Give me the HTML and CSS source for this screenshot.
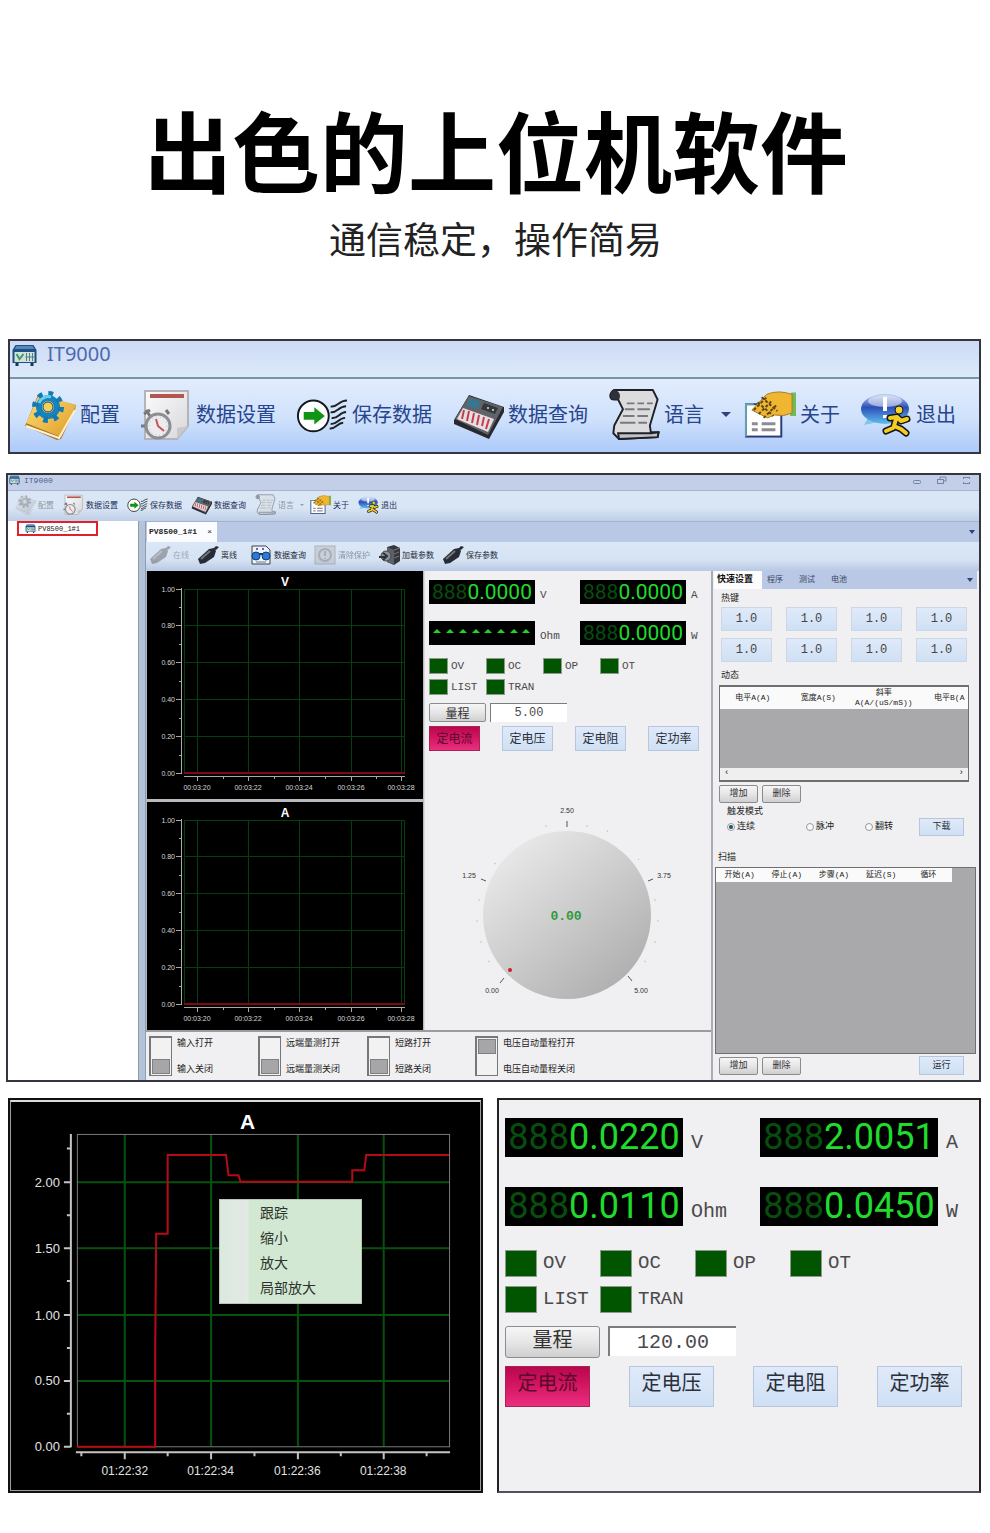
FILE: index.html
```html
<!DOCTYPE html>
<html lang="zh-CN">
<head>
<meta charset="utf-8">
<meta name="viewport" content="width=device-width, initial-scale=1">
<title>出色的上位机软件</title>
<link rel="stylesheet" href="styles.css">
</head>
<body>
<svg class="sprite" aria-hidden="true">
  <defs>
    <linearGradient id="gold" x1="0" y1="0" x2="1" y2="1"><stop offset="0" stop-color="#ffe27a"/><stop offset="1" stop-color="#dd9a26"/></linearGradient>
    <linearGradient id="glass" x1="0" y1="0" x2="0" y2="1"><stop offset="0" stop-color="#b9cbf0"/><stop offset=".45" stop-color="#2c50b8"/><stop offset="1" stop-color="#5fc0ee"/></linearGradient>
    <linearGradient id="paper" x1="0" y1="0" x2="1" y2="1"><stop offset="0" stop-color="#fbfbfc"/><stop offset="1" stop-color="#d8d8dc"/></linearGradient>
    <linearGradient id="dial" x1="0.1" y1="0.05" x2="0.85" y2="0.95"><stop offset="0" stop-color="#ececed"/><stop offset=".45" stop-color="#d0d0d1"/><stop offset="1" stop-color="#adadae"/></linearGradient>
  </defs>
  <symbol id="i-app" viewBox="0 0 26 22">
    <path d="M4 1h18l3 5v13H1V6z" fill="#1f4f86"/><path d="M5 2h16l2 3H3z" fill="#5688b8"/>
    <rect x="3" y="8" width="20" height="10" fill="#cfe3d6"/><path d="M5 10l3 5 4-5" fill="none" stroke="#3f9a68" stroke-width="2"/>
    <path d="M15 9v8M18 9v8M21 9v8M14 13h9" stroke="#557a90"/><path d="M4 19h3v3H4zM19 19h3v3h-3z" fill="#1b3356"/>
  </symbol>
  <symbol id="i-config" viewBox="0 0 52 52">
    <path d="M1 38L14 7l38 10-1 5-14 29-4 1z" fill="#a9772c"/><path d="M2 35L15 7l37 10-15 32z" fill="url(#gold)"/>
    <path d="M2 38l33 12 16-28" fill="none" stroke="#fff3cf" stroke-width="2"/>
    <circle cx="24" cy="19" r="9" fill="none" stroke="#1583bd" stroke-width="6"/>
    <circle cx="24" cy="19" r="13" fill="none" stroke="#1478b2" stroke-width="6" stroke-dasharray="4.5 5.7"/>
    <path d="M15 15a10 10 0 0 1 12-6" fill="none" stroke="#62d0ee" stroke-width="3"/>
    <circle cx="24" cy="19" r="5" fill="#f5cf5b" stroke="#0d4d80"/>
  </symbol>
  <symbol id="i-dataset" viewBox="0 0 52 52">
    <path d="M5 3h43v35L37 51H5z" fill="url(#paper)" stroke="#b5b3b6" stroke-width="2"/><path d="M37 51V40l11-2z" fill="#c9c8cb"/>
    <path d="M10 8h34" stroke="#b05653" stroke-width="4"/>
    <path d="M6 22l4 6M4 26l6-4M1 38h4M26 22l3 4" stroke="#77787c" stroke-width="3"/>
    <circle cx="18" cy="38" r="12" fill="#ececee" stroke="#8d8e93" stroke-width="3"/><circle cx="18" cy="38" r="9" fill="none" stroke="#bbb" stroke-dasharray="1 3"/>
    <path d="M16 31l2 7 6 5" fill="none" stroke="#c8525a" stroke-width="2"/>
  </symbol>
  <symbol id="i-save" viewBox="0 0 54 52">
    <circle cx="18" cy="28" r="16" fill="#fff" stroke="#14181c" stroke-width="2"/>
    <path d="M8 24h11v-5l11 9-11 9v-5H8z" fill="#109414"/>
    <path d="M36 18c6 2 8-6 17-6M36 24c6 2 8-6 16-6M37 30c6 2 8-6 15-6M36 36c6 2 8-6 15-6M35 41c6 1 8-6 14-6" fill="none" stroke="#1c2127" stroke-width="2"/>
  </symbol>
  <symbol id="i-query" viewBox="0 0 52 52">
    <path d="M2 32L17 7l35 12v5L37 51 2 36z" fill="#27292e"/><path d="M3 31L17 8l34 11-15 28z" fill="#60636a"/>
    <path d="M18 10l11 4-5 7-10-4z" fill="#35788f"/><path d="M32 15l14 5-3 6-14-5z" fill="#34373b"/>
    <path d="M11 20l31 11-6 13L5 31z" fill="#e4dfe1"/>
    <path d="M12 22l-2 9M17 23l-2 10M22 25l-2 10M27 27l-2 10M32 29l-2 9M37 31l-3 10" stroke="#c83c4e" stroke-width="2"/>
    <circle cx="36" cy="20" r="1" fill="#ddd"/><circle cx="41" cy="22" r="1" fill="#ddd"/>
  </symbol>
  <symbol id="i-lang" viewBox="0 0 53 54">
    <path d="M6 2h40l5 10-8 27 1 7h8l-1 5-40 2-6-6 1-8 9-17-5-10H6C1 12 0 6 6 2z" fill="#dcdcde" stroke="#1e2126" stroke-width="2" stroke-linejoin="round"/>
    <path d="M6 2c6 1 7 6 5 10H6C1 11 1 5 6 2z" fill="#2d323a"/><path d="M10 47h34l8-1-1 5-40 2z" fill="#c2c2c5" stroke="#1e2126" stroke-width="2"/>
    <path d="M19 16h8m3 0h7m3 0h6M17 22h10m3 0h13M15 29h12m3 0h11M12 36h16m3 0h9" stroke="#77797d" stroke-width="2"/>
  </symbol>
  <symbol id="i-about" viewBox="0 0 53 52">
    <path d="M48 4h5v24h-6z" fill="#71bb55"/><rect x="2" y="16" width="36" height="33" fill="#fff" stroke="#2b3a78" stroke-width="2"/>
    <path d="M2 49V16h8" fill="none" stroke="#63a1b3" stroke-width="2"/>
    <path d="M23 6q12-5 26 0v19q-8 4-18 2l-7 3-16-8z" fill="#f0b632" stroke="#a77b24"/>
    <path d="M10 22L24 8m-9 18L29 12m-9 18L34 16M14 14l16 14M18 9l16 14" stroke="#5c4514" stroke-width="2" stroke-dasharray="3 2"/>
    <path d="M8 36h6m4 0h14M8 42h6m4 0h14" stroke="#8b8d93" stroke-width="3"/>
  </symbol>
  <symbol id="i-exit" viewBox="0 0 52 52">
    <path d="M8 30l-4 7 14-3z" fill="#7fc6ea"/><ellipse cx="25" cy="21" rx="24" ry="15" fill="url(#glass)"/><ellipse cx="25" cy="13" rx="17" ry="6" fill="#fff" opacity=".5"/>
    <path d="M25 9v14M25 27v3" stroke="#fff" stroke-width="4"/>
    <g fill="none" stroke-linecap="round" stroke-linejoin="round"><path d="M30 30l7-1 4 4 6-2M36 31l-2 7 7 3 5 4M33 40l-7 3" stroke="#151515" stroke-width="7"/><path d="M30 30l7-1 4 4 6-2M36 31l-2 7 7 3 5 4M33 40l-7 3" stroke="#f3cd25" stroke-width="4"/></g>
    <circle cx="39" cy="22" r="4" fill="#f7d62a" stroke="#151515"/>
  </symbol>
  <symbol id="i-pen" viewBox="0 0 22 20">
    <path d="M1 14L12 4l5-1 2 3-2 6-9 6-5 1z" fill="currentColor"/><path d="M4 14l9-8" stroke="#fff" stroke-opacity=".35" stroke-width="2"/><path d="M16 4l3-3 3 1-3 3z" fill="currentColor"/>
  </symbol>
  <symbol id="i-find" viewBox="0 0 22 20">
    <path d="M2 1h14l4 4v14H2z" fill="#eef3fa" stroke="#3b4350"/><circle cx="7" cy="4" r="1" fill="#38348b"/><circle cx="13" cy="4" r="1" fill="#38348b"/>
    <circle cx="6" cy="11" r="4" fill="#2e79d6" stroke="#123c78"/><circle cx="16" cy="11" r="4" fill="#2e79d6" stroke="#123c78"/><path d="M9 9h4" stroke="#123c78" stroke-width="2"/><path d="M6 17h10" stroke="#777"/>
  </symbol>
  <symbol id="i-clear" viewBox="0 0 22 20">
    <rect x="1" y="1" width="20" height="18" fill="#b4b6b8" stroke="#77797c"/><circle cx="11" cy="10" r="6" fill="none" stroke="#6b6d70" stroke-width="2"/><path d="M11 6v5M11 13v1" stroke="#6b6d70" stroke-width="2"/>
  </symbol>
  <symbol id="i-load" viewBox="0 0 22 20">
    <path d="M9 2l7-2 6 3v13l-6 4-7-3z" fill="#34373c"/><path d="M9 2l7 3v15l-7-3z" fill="#5c6067"/><path d="M16 5l6-2M16 9l5-2M16 13l5-2" stroke="#777"/>
    <circle cx="8" cy="11" r="5" fill="#8d9298" stroke="#44484e"/><path d="M1 12h7M5 8l4 3-4 4" fill="none" stroke="#2f3338" stroke-width="2"/>
  </symbol>
  <symbol id="trend-grid" viewBox="0 0 276 228">
    <g stroke="#04400f"><path d="M37 18.5H258M37 54.5H258M37 91.5H258M37 128.5H258M37 165.5H258"/><path d="M37.5 18V202M50.5 18V202M101.5 18V202M152.5 18V202M204.5 18V202M254.5 18V202M257.5 18V202"/></g>
    <path d="M37 202H258" stroke="#7d0a12" stroke-width="2"/>
    <path d="M34.5 17V203M29 18.5h5M29 54.5h5M29 91.5h5M29 128.5h5M29 165.5h5M29 202.5h5M32 36.5h2M32 73.5h2M32 110.5h2M32 147.5h2M32 184.5h2M37 205.5H258M50.5 206v4M101.5 206v4M152.5 206v4M204.5 206v4M254.5 206v4M76.5 206v2M127.5 206v2M178.5 206v2M229.5 206v2" stroke="#a9a9a9" fill="none"/>
  </symbol>
</svg>

<main class="page">
  <header class="hero">
    <h1>出色的上位机软件</h1>
    <p>通信稳定，操作简易</p>
  </header>

  <section class="banner">
    <div class="banner-title"><svg class="app-icon"><use href="#i-app"/></svg><span>IT9000</span></div>
    <nav class="tools tools-lg">
      <button><svg><use href="#i-config"/></svg>配置</button>
      <button><svg><use href="#i-dataset"/></svg>数据设置</button>
      <button><svg><use href="#i-save"/></svg>保存数据</button>
      <button><svg><use href="#i-query"/></svg>数据查询</button>
      <button class="has-menu"><svg><use href="#i-lang"/></svg>语言<i class="caret"></i></button>
      <button><svg><use href="#i-about"/></svg>关于</button>
      <button><svg><use href="#i-exit"/></svg>退出</button>
    </nav>
  </section>

  <section class="window">
    <div class="win-title">
      <svg class="app-icon"><use href="#i-app"/></svg><span>IT9000</span>
      <svg class="win-buttons" viewBox="0 0 60 12" fill="none" stroke="#7583a6"><rect x="2.5" y="5.5" width="7" height="3" rx="1"/><rect x="26.5" y="4.5" width="6" height="4"/><path d="M29 4V2h6v4h-2"/><path d="M52 2.5h7M52 8.5h7M52.5 2v2M58.5 2v2M52.5 7v2M58.5 7v2"/></svg>
    </div>
    <nav class="tools tools-sm">
      <button disabled><svg><use href="#i-config"/></svg>配置</button>
      <button><svg><use href="#i-dataset"/></svg>数据设置</button>
      <button><svg><use href="#i-save"/></svg>保存数据</button>
      <button><svg><use href="#i-query"/></svg>数据查询</button>
      <button class="has-menu" disabled><svg><use href="#i-lang"/></svg>语言<i class="caret"></i></button>
      <button><svg><use href="#i-about"/></svg>关于</button>
      <button><svg><use href="#i-exit"/></svg>退出</button>
    </nav>
    <div class="win-body">
      <aside class="tree"><a class="tree-item" href="#device"><svg><use href="#i-app"/></svg>PV8500_1#1</a></aside>
      <div class="splitter"></div>
      <div class="workspace" id="device">
        <div class="doc-tabs"><span class="doc-tab"><b>PV8500_1#1</b><button aria-label="关闭">×</button></span><i class="caret"></i></div>
        <nav class="tools tools-doc">
          <button disabled class="pen-off"><svg><use href="#i-pen"/></svg>在线</button>
          <button><svg><use href="#i-pen"/></svg>离线</button>
          <button class="group"><svg><use href="#i-find"/></svg>数据查询</button>
          <button disabled><svg><use href="#i-clear"/></svg>清除保护</button>
          <button><svg><use href="#i-load"/></svg>加载参数</button>
          <button><svg><use href="#i-pen"/></svg>保存参数</button>
        </nav>
        <div class="panes">
          <div class="left-panes">
            <div class="monitor">
              <div class="trends">
                <svg class="trend" viewBox="0 0 276 228"><use href="#trend-grid" width="276" height="228"/>
                  <text class="t-title" x="138" y="15">V</text>
                  <g class="t-y"><text x="28" y="21">1.00</text><text x="28" y="57">0.80</text><text x="28" y="94">0.60</text><text x="28" y="131">0.40</text><text x="28" y="168">0.20</text><text x="28" y="205">0.00</text></g>
                  <g class="t-x"><text x="50" y="219">00:03:20</text><text x="101" y="219">00:03:22</text><text x="152" y="219">00:03:24</text><text x="204" y="219">00:03:26</text><text x="254" y="219">00:03:28</text></g>
                </svg>
                <svg class="trend" viewBox="0 0 276 228"><use href="#trend-grid" width="276" height="228"/>
                  <text class="t-title" x="138" y="15">A</text>
                  <g class="t-y"><text x="28" y="21">1.00</text><text x="28" y="57">0.80</text><text x="28" y="94">0.60</text><text x="28" y="131">0.40</text><text x="28" y="168">0.20</text><text x="28" y="205">0.00</text></g>
                  <g class="t-x"><text x="50" y="219">00:03:20</text><text x="101" y="219">00:03:22</text><text x="152" y="219">00:03:24</text><text x="204" y="219">00:03:26</text><text x="254" y="219">00:03:28</text></g>
                </svg>
              </div>
              <div class="meter meter-sm">
                <div class="readouts">
                  <div class="readout"><output><s>888</s>0.0000</output><span>V</span></div>
                  <div class="readout"><output><s>888</s>0.0000</output><span>A</span></div>
                  <div class="readout"><output><svg class="over" viewBox="0 0 104 22" fill="#1fd52b"><path d="M4 12l4-4 4 4zM17 12l4-4 4 4zM30 12l4-4 4 4zM43 12l4-4 4 4zM55 12l4-4 4 4zM68 12l4-4 4 4zM81 12l4-4 4 4zM93 12l4-4 4 4z"/></svg></output><span>Ohm</span></div>
                  <div class="readout"><output><s>888</s>0.0000</output><span>W</span></div>
                </div>
                <ul class="lamps"><li>OV</li><li>OC</li><li>OP</li><li>OT</li><li>LIST</li><li>TRAN</li></ul>
                <div class="range"><button id="range-a">量程</button><input aria-labelledby="range-a" value="5.00"></div>
                <div class="modes"><button class="on">定电流</button><button>定电压</button><button>定电阻</button><button>定功率</button></div>
                <svg class="knob" viewBox="0 0 230 200">
                  <circle cx="111" cy="116" r="84" fill="url(#dial)"/>
                  <path d="M111 22v6M25 80l5 2M192 82l5-2M44 184l4-5M172 177l4 5" stroke="#555"/>
                  <path d="M90 26v2M131 26v2M151 33l1-2M38 64l2 1M182 61l1-1M198 101h2M201 122h2M198 143h2M22 101h2M20 122h2M24 143h2M32 163l2-1M188 162l2 1" stroke="#c4c4c8"/>
                  <circle cx="54" cy="171" r="2" fill="#d31d2b"/>
                  <g class="knob-scale"><text x="111" y="14">2.50</text><text x="13" y="79">1.25</text><text x="208" y="79">3.75</text><text x="36" y="194">0.00</text><text x="185" y="194">5.00</text></g>
                  <text class="knob-value" x="110" y="121">0.00</text>
                </svg>
              </div>
            </div>
            <div class="switches">
              <label><input type="checkbox" role="switch"><span>输入打开</span><span>输入关闭</span></label>
              <label><input type="checkbox" role="switch"><span>远端量测打开</span><span>远端量测关闭</span></label>
              <label><input type="checkbox" role="switch"><span>短路打开</span><span>短路关闭</span></label>
              <label><input type="checkbox" role="switch" checked><span>电压自动量程打开</span><span>电压自动量程关闭</span></label>
            </div>
          </div>
          <div class="settings">
            <div class="set-tabs"><button class="on">快速设置</button><button>程序</button><button>测试</button><button>电池</button><i class="caret"></i></div>
            <div class="set-body">
              <h2>热键</h2>
              <div class="hotkeys"><button>1.0</button><button>1.0</button><button>1.0</button><button>1.0</button><button>1.0</button><button>1.0</button><button>1.0</button><button>1.0</button></div>
              <h2>动态</h2>
              <div class="grid-box dyn">
                <table><thead><tr><th>电平A(A)</th><th>宽度A(S)</th><th>斜率<br>A(A/(uS/mS))</th><th>电平B(A</th></tr></thead></table>
                <div class="hscroll"><span>‹</span><span>›</span></div>
              </div>
              <div class="actions"><button>增加</button><button>删除</button></div>
              <fieldset class="trigger">
                <legend>触发模式</legend>
                <label><input type="radio" name="trig" checked>连续</label><label><input type="radio" name="trig">脉冲</label><label><input type="radio" name="trig">翻转</label>
                <button class="blue">下载</button>
              </fieldset>
              <h2 class="flush">扫描</h2>
              <div class="grid-box sweep">
                <table><thead><tr><th>开始(A)</th><th>停止(A)</th><th>步骤(A)</th><th>延迟(S)</th><th>循环</th></tr></thead></table>
              </div>
              <div class="actions last"><button>增加</button><button>删除</button><button class="blue">运行</button></div>
            </div>
          </div>
        </div>
      </div>
    </div>
  </section>

  <div class="details">
    <section class="scope">
      <svg viewBox="0 0 470 389">
        <path d="M66 80.5H439M66 146.5H439M66 213.5H439M66 279.5H439M114 32V345M200.5 32V345M287.5 32V345M373.5 32V345" stroke="#07520f" stroke-width="2" fill="none"/>
        <rect x="66.5" y="32.5" width="373" height="313" fill="none" stroke="#7b7b7b"/>
        <path d="M60 32V346M53 80.5h7M53 146.5h7M53 213.5h7M53 279.5h7M53 345.5h7M56 46.5h4M56 113.5h4M56 179.5h4M56 246.5h4M56 312.5h4M65 351H440M114 351v7M200.5 351v7M287.5 351v7M373.5 351v7M70.5 351v4M157 351v4M244 351v4M330.5 351v4M416.5 351v4" stroke="#c4c4c4" stroke-width="2" fill="none"/>
        <path d="M66 345.5H144.5V250L145.5 132H157V53H215.5L218 73.5H228L230 80H342V68.5H354L356 53H439" fill="none" stroke="#b50b17" stroke-width="2"/>
        <text class="t-title" x="237" y="27">A</text>
        <g class="t-y"><text x="49" y="85">2.00</text><text x="49" y="151">1.50</text><text x="49" y="218">1.00</text><text x="49" y="284">0.50</text><text x="49" y="350">0.00</text></g>
        <g class="t-x"><text x="114" y="374">01:22:32</text><text x="200" y="374">01:22:34</text><text x="287" y="374">01:22:36</text><text x="373" y="374">01:22:38</text></g>
      </svg>
      <menu class="popup"><li><button>跟踪</button></li><li><button>缩小</button></li><li><button>放大</button></li><li><button>局部放大</button></li></menu>
    </section>
    <section class="meter meter-lg">
      <div class="readouts">
        <div class="readout"><output><s>888</s>0.0220</output><span>V</span></div>
        <div class="readout"><output><s>888</s>2.0051</output><span>A</span></div>
        <div class="readout"><output><s>888</s>0.0110</output><span>Ohm</span></div>
        <div class="readout"><output><s>888</s>0.0450</output><span>W</span></div>
      </div>
      <ul class="lamps"><li>OV</li><li>OC</li><li>OP</li><li>OT</li><li>LIST</li><li>TRAN</li></ul>
      <div class="range"><button id="range-b">量程</button><input aria-labelledby="range-b" value="120.00"></div>
      <div class="modes"><button class="on">定电流</button><button>定电压</button><button>定电阻</button><button>定功率</button></div>
    </section>
  </div>
</main>
</body>
</html>
```
FILE: styles.css
```css
*, *::before, *::after { box-sizing: border-box; }
body { margin: 0; background: #fff; color: #222; font-family: "Liberation Sans", "Noto Sans CJK SC", sans-serif; }
button, input { margin: 0; padding: 0; border: 0; background: none; color: inherit; font: inherit; border-radius: 0; }
h1, h2, p, ul, menu { margin: 0; padding: 0; list-style: none; }
svg { display: block; flex: none; }
.sprite { position: absolute; width: 0; height: 0; }
.page { padding: 0 9px 40px 8px; }

.hero { height: 339px; padding-top: 84px; text-align: center; color: #000; font-family: "Noto Sans CJK SC", sans-serif; }
.hero h1 { padding-left: 3px; font-size: 88px; line-height: 128px; font-weight: 700; }
.hero p { padding: 2px 0 0 2px; font-size: 37px; line-height: 48px; color: #222; }

.caret { width: 0; border: 4px solid transparent; border-top: 5px solid #2c4478; border-bottom: 0; }
.tools { display: flex; align-items: center; white-space: nowrap; font-family: "Noto Sans CJK SC", sans-serif; }
.tools button { display: flex; flex: none; align-items: center; }
.tools button:disabled { opacity: .45; filter: grayscale(1); }

/* enlarged toolbar */
.banner { border: 2px solid #33363e; background: #dce9fb; }
.banner-title { display: flex; gap: 9px; height: 38px; padding: 3px 1px; border-bottom: 2px solid #7c94a8; background: linear-gradient(#cddaf5, #dceafb); color: #4c6aac; font: 20px/20px "Noto Sans", sans-serif; }
.banner .app-icon { width: 27px; height: 22px; }
.tools-lg { gap: 20px; height: 73px; padding: 0 14px 3px; background: linear-gradient(#e2edfd, #cfe1fc 55%, #adcafa); color: #27458c; font-size: 20px; line-height: 28px; }
.tools-lg button { gap: 4px; }
.tools-lg svg { width: 52px; height: 52px; }
.tools-lg .caret { margin: 0 -7px 0 13px; border-width: 5px 5px 0; }

/* application window */
.window { margin: 19px 0 0 -2px; border: 2px solid #33363e; background: #c0cfe8; font-size: 8px; }
.win-title { display: flex; gap: 4px; height: 16px; padding: 0 8px 0 1px; border-bottom: 1px solid #a7b5cf; background: #c3cfe8; color: #4c5f94; font: 8px/12px "Liberation Mono", monospace; }
.win-title .app-icon { width: 11px; height: 10px; }
.win-buttons { width: 60px; height: 12px; margin-left: auto; }
.tools-sm { gap: 9px; height: 30px; padding: 0 7px 3px; background: linear-gradient(#dae6f5, #d9e6f6 55%, #bfcee7); color: #232f55; }
.tools-sm button { gap: 2px; }
.tools-sm svg { width: 21px; height: 21px; }
.tools .caret, .doc-tabs .caret, .set-tabs .caret { flex: none; }
.tools-sm .caret { margin: 0 -3px 0 4px; border-width: 2px 2px 0; }
.win-body { display: grid; grid-template-columns: 130px 8px minmax(0, 1fr); height: 559px; }
.tree { padding: 0 9px; background: #fff; }
.tree-item { display: flex; align-items: center; gap: 2px; width: 81px; height: 15px; padding-left: 6px; border: 2px solid #e0202a; color: #222; font: 7px/10px "Liberation Mono", monospace; text-decoration: none; }
.tree-item svg { width: 11px; height: 9px; }
.splitter { background: #b4c4d8; border: solid #8d9db1; border-width: 0 1px; }
.workspace { display: flex; flex-direction: column; min-width: 0; }
.doc-tabs { display: flex; align-items: center; justify-content: space-between; height: 21px; padding: 0 4px 0 1px; background: #b9c8e5; border-top: 1px solid #a2b2cf; }
.doc-tab { display: flex; align-items: center; justify-content: space-between; width: 70px; height: 20px; padding: 0 5px 0 2px; background: #fbfcff; font: 8px/12px "Liberation Mono", monospace; }
.tools-doc { gap: 8px; height: 29px; padding: 0 3px 4px; background: linear-gradient(#dbe7f6, #d6e3f4 60%, #b9c9e4); color: #232f55; }
.tools-doc button { gap: 2px; color: #262b36; }
.tools-doc .pen-off { color: #555; }
.tools-doc .group { margin-left: 5px; }
.tools-doc svg { width: 22px; height: 20px; }
.panes { display: grid; grid-template-columns: minmax(0, 1fr) 266px; flex: 1; min-height: 0; background: #f0eff1; }
.left-panes { display: flex; flex-direction: column; border-right: 2px solid #a8adb6; }
.monitor { display: grid; grid-template-columns: 279px minmax(0, 1fr); height: 461px; border-bottom: 2px solid #9b9ba0; }
.trends { display: flex; flex-direction: column; gap: 3px; padding: 0 1px; background: #b9b9bf; border-right: 1px solid #dcdce0; }
.trend { width: 276px; height: 228px; background: #000; }
.trend text, .scope text { fill: #d6d6d6; font: 7px "Liberation Sans", sans-serif; }
.trend .t-title { fill: #fff; font-size: 12px; font-weight: 700; text-anchor: middle; }
.t-y { text-anchor: end; }
.t-x { text-anchor: middle; }

/* measurement panel, in two sizes */
.meter { background: #f0eff1; color: #4a4a4c; font-family: "Liberation Mono", "Noto Sans CJK SC", monospace; }
.readouts { display: grid; }
.readout { display: flex; align-items: center; }
.readout output { flex: none; background: #000; color: #1fdc2c; font-family: Roboto, sans-serif; text-align: center; white-space: nowrap; }
.readout s { color: #074d0e; text-decoration: none; }
.lamps { display: grid; }
.lamps li { display: flex; align-items: center; white-space: nowrap; }
.lamps li::before { content: ""; flex: none; background: #015501; border: 1px solid #8f9a8f; }
.range { display: flex; }
.range button, .actions button { border: 1px solid #8c8c8e; border-radius: 2px; background: linear-gradient(#f6f6f6, #e6e6e7 50%, #cfcfd0); color: #333; }
.range input { background: #fff; border: solid #7c7c7e; border-width: 1px 0 0 1px; text-align: center; }
.modes { display: grid; }
.modes button, .blue.blue, .hotkeys button { border: 1px solid #b7c6dc; background: linear-gradient(#dfeafa, #cfe0f4); color: #2b2f38; }
.modes .on.on { border-color: #a62456; background: linear-gradient(#b8074d, #d61763 50%, #ea2f80); color: #5a0a2e; }

.meter-sm { padding: 9px 0 0 4px; font-size: 12px; }
.meter-sm .readouts { grid-template-columns: 151px 1fr; row-gap: 17px; }
.meter-sm .readout { gap: 5px; }
.meter-sm output { width: 106px; height: 24px; font-size: 21px; line-height: 24px; }
.meter-sm .readout span { padding-top: 6px; font-size: 11px; }
.over { width: 104px; height: 22px; }
.meter-sm .lamps { grid-template-columns: repeat(4, 57px); gap: 5px 0; margin-top: 13px; line-height: 16px; }
.meter-sm .lamps li { gap: 3px; font-size: 11px; }
.meter-sm .lamps li::before { width: 19px; height: 16px; }
.meter-sm .range { gap: 4px; margin-top: 8px; height: 19px; }
.meter-sm .range button { width: 57px; }
.meter-sm .range input { width: 77px; }
.meter-sm .modes { grid-template-columns: repeat(4, 51px); gap: 22px; margin-top: 4px; }
.meter-sm .modes button { height: 25px; padding-bottom: 2px; white-space: nowrap; }
.knob { width: 230px; height: 200px; margin: 48px 0 0 27px; }
.knob-scale { font: 7px "Liberation Sans", sans-serif; text-anchor: middle; fill: #333; }
.knob-value { font: 700 13px "Liberation Mono", monospace; text-anchor: middle; fill: #2e9a3c; }

.switches { display: grid; grid-template-columns: 109px 109px 108px minmax(0, 1fr); flex: 1; padding: 4px 3px 2px; font: 9px/14px "Noto Sans CJK SC", sans-serif; }
.switches label { display: grid; grid-template-columns: 22px 1fr; grid-template-rows: 20px 20px; column-gap: 6px; white-space: nowrap; }
.switches span:last-child { align-self: end; }
.switches input { appearance: none; grid-row: 1 / 3; width: 23px; height: 40px; padding: 1px; border: solid #77777a; border-width: 2px 1px 1px 2px; background: #f3f2f3; }
.switches input::before { content: ""; display: block; height: 15px; margin-top: 20px; background: #a6a6a8; border: 1px solid #808083; }
.switches input:checked::before { margin-top: 0; }

/* settings column */
.settings { padding: 0 2px 0 1px; background: #f0eff1; font: 9px/12px "Liberation Mono", "Noto Sans CJK SC", monospace; }
.set-tabs { display: flex; align-items: center; height: 18px; padding-right: 4px; background: #b9c8e5; color: #3b4662; font-family: "Noto Sans CJK SC", sans-serif; font-size: 8px; }
.set-tabs button { width: 32px; height: 18px; padding-bottom: 2px; }
.set-tabs .on { width: 48px; margin-right: -3px; padding-right: 6px; background: #fdfdff; color: #111; font-size: 9px; font-weight: 700; }
.set-tabs .caret { margin-left: auto; }
.doc-tabs .caret, .set-tabs .caret { border-width: 4px 3px 0; }
.set-body { padding-top: 3px; }
.set-body h2 { padding-left: 7px; font-size: 9px; line-height: 14px; font-weight: 400; }
.hotkeys { display: grid; grid-template-columns: repeat(4, 51px); gap: 7px 14px; padding: 1px 7px 7px; }
.hotkeys button { height: 24px; border-color: #ccd6e4; font-size: 12px; line-height: 20px; color: #444; }
.grid-box { background: #a9a8aa; border: 1px solid #6f6f72; overflow: hidden; }
.grid-box table { border-collapse: collapse; table-layout: fixed; background: #fafafa; }
.grid-box th { padding: 0; font: 8px/10px "Liberation Mono", "Noto Sans CJK SC", monospace; white-space: nowrap; }
.dyn { display: flex; flex-direction: column; justify-content: space-between; height: 97px; margin: 2px 8px 0 5px; border-width: 2px 1px; }
.dyn table { width: 262px; }
.dyn th { height: 22px; }
.hscroll { display: flex; justify-content: space-between; height: 12px; padding: 0 4px; background: #efeff0; line-height: 10px; }
.actions { display: flex; gap: 4px; margin: 3px 13px 0 5px; line-height: 14px; }
.actions button { width: 39px; height: 18px; white-space: nowrap; }
.trigger { display: grid; grid-template-columns: 79px 59px 1fr 45px; align-items: center; margin: 3px 13px 13px; padding: 0; border: 0; min-width: 0; }
.trigger legend { padding: 0; line-height: 12px; }
.trigger label { display: flex; align-items: center; gap: 2px; }
.trigger input { appearance: none; width: 8px; height: 8px; border: 1px solid #9a9a9c; border-radius: 50%; background: #f8f8f8; }
.trigger input:checked { background: radial-gradient(#23586a 35%, #f8f8f8 60%); }
.trigger .blue { height: 18px; }
.set-body .flush { padding-left: 4px; line-height: 18px; }
.sweep { height: 187px; margin: 0 1px; }
.sweep table { width: 236px; }
.sweep th { height: 14px; }
.actions.last { margin-top: 2px; align-items: center; }
.actions .blue { width: 45px; height: 19px; margin-left: auto; border-radius: 0; }

/* enlarged details */
.details { display: grid; grid-template-columns: 475fr 484fr; gap: 14px; margin: 16px 0 0; }
.scope { position: relative; border: 2px solid #111; background: #000; }
.scope > svg { width: 100%; height: auto; border: solid #9d9da0; border-width: 2px 1px 1px; border-top-color: #dcdce0; }
.scope text { font-size: 13px; fill: #e2e2e2; }
.scope .t-x text { font-size: 12px; }
.scope .t-title { font-size: 21px; font-weight: 700; text-anchor: middle; fill: #fff; }
.popup { position: absolute; left: 209px; top: 99px; width: 143px; padding: 0 0 3px 40px; border: 1px solid #b6c7b8; background: linear-gradient(90deg, #dbe9de, #e3e8e5 28px, #d3e8d3 29px); font: 14px/25px "Noto Sans CJK SC", sans-serif; color: #2b332c; }
.popup button { display: block; height: 25px; line-height: 25px; }

.meter-lg { padding: 18px 6px 0; border: 2px solid #222; border-bottom-color: #55505a; font-size: 20px; }
.meter-lg .readouts { grid-template-columns: 255px 1fr; row-gap: 30px; }
.meter-lg .readout { gap: 8px; }
.meter-lg output { width: 178px; height: 39px; font-size: 36px; line-height: 39px; }
.meter-lg .readout span { padding-top: 10px; }
.meter-lg .lamps { grid-template-columns: repeat(4, 95px); gap: 9px 0; margin-top: 24px; line-height: 27px; }
.meter-lg .lamps li { gap: 6px; font-size: 19px; }
.meter-lg .lamps li::before { width: 32px; height: 27px; }
.meter-lg .range { gap: 8px; height: 32px; margin-top: 13px; }
.meter-lg .range button { width: 95px; border-radius: 3px; line-height: 28px; }
.meter-lg .range input { width: 128px; height: 30px; border-width: 2px 0 0 2px; }
.meter-lg .modes { grid-template-columns: repeat(4, 85px); gap: 39px; margin-top: 8px; }
.meter-lg .modes button { height: 41px; padding-bottom: 4px; white-space: nowrap; line-height: 30px; }
```
